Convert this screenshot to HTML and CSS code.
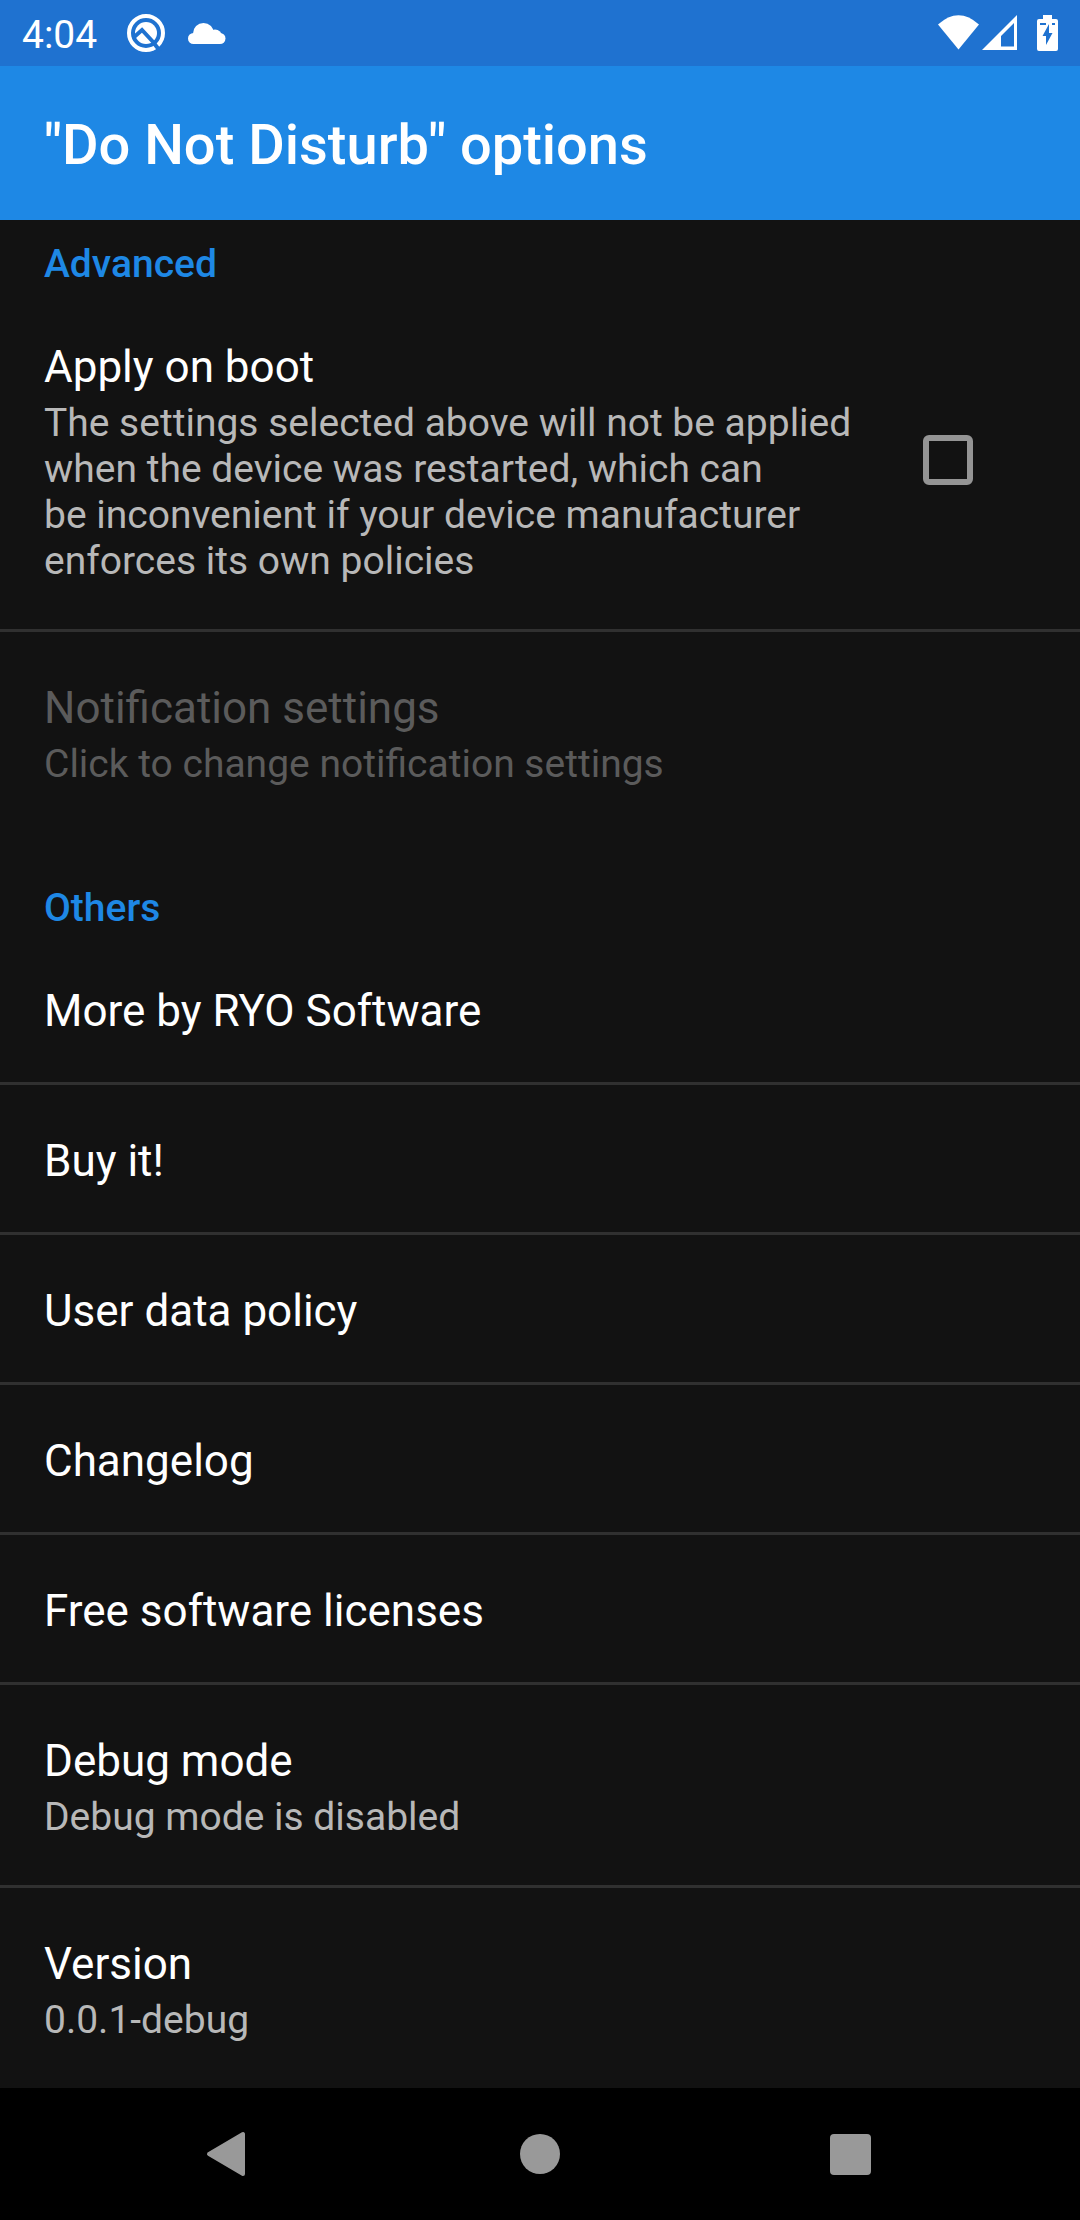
FILE: index.html
```html
<!DOCTYPE html>
<html lang="en">
<head>
    <meta charset="UTF-8">
    <meta name="viewport" content="width=device-width, initial-scale=1.0">
    <title>"Do Not Disturb" options</title>
    <link rel="stylesheet" href="styles.css">
</head>
<body>

<!-- Status bar -->
<div class="status-bar">
    <span class="clock">4:04</span>
    <svg class="icon-q" width="38" height="38" viewBox="-19 -19 38 38">
        <circle r="17" fill="none" stroke="#fff" stroke-width="4"/>
        <circle r="11" fill="#fff"/>
        <path d="M-13 5L-4 -3L9 11" fill="none" stroke="#1f72d0" stroke-width="4"/>
        <path d="M7 9L14 18" stroke="#1f72d0" stroke-width="4"/>
    </svg>
    <svg class="icon-cloud" width="38" height="21" viewBox="0 0 38 21" fill="#fff">
        <circle cx="15.500" cy="10.500" r="10.500"/>
        <circle cx="5.500" cy="15.500" r="5.500"/>
        <circle cx="27" cy="13.500" r="7"/>
        <circle cx="32" cy="15.500" r="5.500"/>
        <rect x="5" y="13" width="27" height="8"/>
    </svg>
    <div class="status-right">
        <svg width="41" height="36" viewBox="0 0 41 36">
            <path fill="#fff" d="M0 9.500Q20.500 -9 41 9.500L20.500 34.500Z"/>
        </svg>
        <svg class="icon-signal" width="35" height="36" viewBox="0 0 35 36">
            <path fill="#fff" fill-rule="evenodd" d="M35 0V35H0ZM32 8L19 21V31.500H32Z"/>
        </svg>
        <svg class="icon-battery" width="21" height="36" viewBox="0 0 21 36">
            <path fill="#fff" d="M6 0H15V4H19Q21 4 21 6V34Q21 36 19 36H2Q0 36 0 34V6Q0 4 2 4H6Z"/>
            <path fill="#1f72d0" d="M3 8H9V10H3ZM15 8H18V10H15ZM12 9V18H15.500L9 30V21H5.500Z"/>
        </svg>
    </div>
</div>

<header>
    <h1>"Do Not Disturb" options</h1>
</header>

<main>
    <!-- Advanced Section -->
    <section id="advanced">
        <h2>Advanced</h2>
        <label class="item" for="apply-on-boot">
            <span class="text">
                <span class="title">Apply on boot</span>
                <span class="summary">The settings selected above will not be applied when the device was restarted, which can be&nbsp;inconvenient if your device manufacturer enforces its own policies</span>
            </span>
            <input type="checkbox" id="apply-on-boot">
        </label>
        <button class="item" disabled>
            <span class="title">Notification settings</span>
            <span class="summary">Click to change notification settings</span>
        </button>
    </section>

    <!-- Others Section -->
    <section id="others">
        <h2>Others</h2>
        <button class="item"><span class="title">More by RYO Software</span></button>
        <button class="item"><span class="title">Buy it!</span></button>
        <button class="item"><span class="title">User data policy</span></button>
        <button class="item"><span class="title">Changelog</span></button>
        <button class="item"><span class="title">Free software licenses</span></button>
        <button class="item">
            <span class="title">Debug mode</span>
            <span class="summary">Debug mode is disabled</span>
        </button>
        <button class="item">
            <span class="title">Version</span>
            <span class="summary">0.0.1-debug</span>
        </button>
    </section>
</main>

<!-- Navigation bar -->
<nav>
    <button aria-label="Back">
        <svg width="48" height="48" viewBox="0 0 48 48"><path d="M3 24L37 4V44Z" stroke="#999" stroke-width="4" stroke-linejoin="round"/></svg>
    </button>
    <button aria-label="Home">
        <svg width="48" height="48" viewBox="0 0 48 48"><circle cx="24" cy="24" r="20"/></svg>
    </button>
    <button aria-label="Recent apps">
        <svg width="48" height="48" viewBox="0 0 48 48"><rect x="4" y="4" width="41" height="41" rx="4"/></svg>
    </button>
</nav>

</body>
</html>
```
FILE: styles.css
```css
/* Global Styles */
* {
    box-sizing: border-box;
}
body {
    font-family: Roboto, sans-serif;
    margin: 0;
    min-height: 100vh;
    display: flex;
    flex-direction: column;
    background-color: #121212;
    color: white;
}
svg {
    display: block;
    flex-shrink: 0;
}
button {
    font-family: inherit;
    background: none;
    border: none;
    color: inherit;
}

/* Status bar */
.status-bar {
    display: flex;
    align-items: center;
    height: 66px;
    padding: 0 22px;
    background-color: #1f72d0;
}
.clock {
    padding-top: 4px;
    font-size: 39px;
    line-height: 46px;
}
.icon-q {
    margin-left: 30px;
}
.icon-cloud {
    margin-left: 23px;
}
.status-right {
    display: flex;
    margin-left: auto;
}
.icon-signal {
    margin-left: 3px;
}
.icon-battery {
    margin-left: 20px;
}

header {
    padding: 46px 44px 42px;
    background-color: #1e88e5;
}
h1 {
    margin: 0;
    font-size: 56px;
    line-height: 66px;
    font-weight: 500;
}

/* Settings list */
main {
    flex: 1;
}
h2 {
    margin: 0;
    padding: 53px 44px 4px;
    color: #1e88e5;
    font-size: 39px;
    line-height: 46px;
    font-weight: 500;
}
#advanced h2 {
    padding-top: 21px;
}
.item {
    display: block;
    width: 100%;
    padding: 50px 44px 45px;
    text-align: left;
    cursor: pointer;
}
.item + .item {
    border-top: 3px solid #303030;
}
label.item {
    display: flex;
    align-items: center;
    justify-content: space-between;
    padding-top: 44px;
    padding-right: 107px;
}
.text {
    flex: 1;
    margin-right: 44px;
    padding-top: 6px;
}
.title {
    display: block;
    font-size: 44px;
    line-height: 52px;
}
.summary {
    display: block;
    margin-top: 7px;
    color: #b8b8b8;
    font-size: 39px;
    line-height: 46px;
}
.item:disabled,
.item:disabled .summary {
    color: #5b5b5b;
    cursor: default;
}
input[type="checkbox"] {
    appearance: none;
    width: 50px;
    height: 50px;
    margin: 0;
    border: 6px solid #949494;
    border-radius: 6px;
}
input[type="checkbox"]:checked {
    background-color: #1e88e5;
}

/* Navigation bar */
nav {
    display: flex;
    height: 132px;
    padding: 0 75px;
    background-color: black;
}
nav button {
    flex: 1;
    display: flex;
    align-items: center;
    justify-content: center;
    cursor: pointer;
}
nav svg {
    fill: #999;
}
```
